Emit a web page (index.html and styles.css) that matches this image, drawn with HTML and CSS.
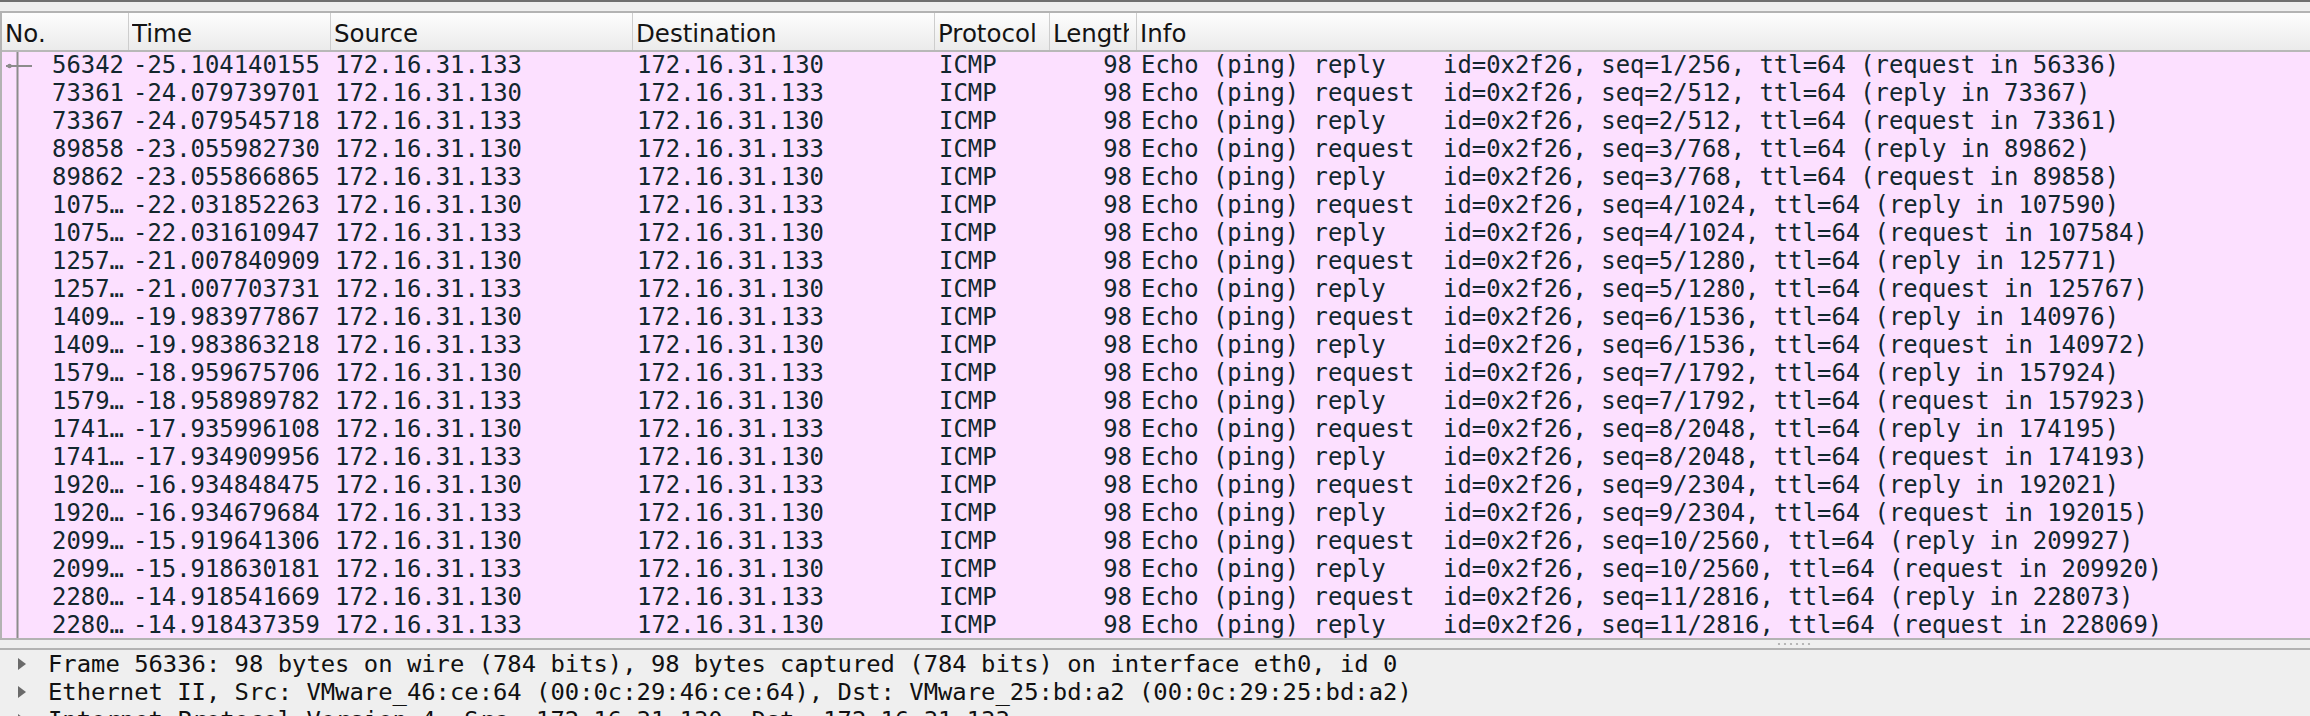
FILE: index.html
```html
<!DOCTYPE html>
<html>
<head>
<meta charset="utf-8">
<link rel="stylesheet" href="styles.css">
</head>
<body>
<div class="topline"></div>
<div class="gap"></div>
<div class="plist">
  <div class="phead">
    <div class="hc"><span class="ht">No.</span></div>
    <div class="hc"><span class="ht">Time</span></div>
    <div class="hc"><span class="ht">Source</span></div>
    <div class="hc"><span class="ht">Destination</span></div>
    <div class="hc"><span class="ht">Protocol</span></div>
    <div class="hc"><span class="ht">Length</span></div>
    <div class="hc last"><span class="ht">Info</span></div>
  </div>
  <div class="pbody">
    <svg class="rel" width="40" height="600" viewBox="0 0 40 600">
      <line x1="15.5" y1="0" x2="15.5" y2="600" stroke="#8c8c8c" stroke-width="2"/>
      <line x1="4" y1="14" x2="30" y2="14" stroke="#8c8c8c" stroke-width="2"/>
      <circle cx="7.5" cy="14" r="2.2" fill="#8c8c8c"/>
    </svg>
    <div class="row"><span class="c r">56342</span><span class="c">-25.104140155</span><span class="c">172.16.31.133</span><span class="c">172.16.31.130</span><span class="c">ICMP</span><span class="c r">98</span><span class="c">Echo (ping) reply    id=0x2f26, seq=1/256, ttl=64 (request in 56336)</span></div>
    <div class="row"><span class="c r">73361</span><span class="c">-24.079739701</span><span class="c">172.16.31.130</span><span class="c">172.16.31.133</span><span class="c">ICMP</span><span class="c r">98</span><span class="c">Echo (ping) request  id=0x2f26, seq=2/512, ttl=64 (reply in 73367)</span></div>
    <div class="row"><span class="c r">73367</span><span class="c">-24.079545718</span><span class="c">172.16.31.133</span><span class="c">172.16.31.130</span><span class="c">ICMP</span><span class="c r">98</span><span class="c">Echo (ping) reply    id=0x2f26, seq=2/512, ttl=64 (request in 73361)</span></div>
    <div class="row"><span class="c r">89858</span><span class="c">-23.055982730</span><span class="c">172.16.31.130</span><span class="c">172.16.31.133</span><span class="c">ICMP</span><span class="c r">98</span><span class="c">Echo (ping) request  id=0x2f26, seq=3/768, ttl=64 (reply in 89862)</span></div>
    <div class="row"><span class="c r">89862</span><span class="c">-23.055866865</span><span class="c">172.16.31.133</span><span class="c">172.16.31.130</span><span class="c">ICMP</span><span class="c r">98</span><span class="c">Echo (ping) reply    id=0x2f26, seq=3/768, ttl=64 (request in 89858)</span></div>
    <div class="row"><span class="c r">1075…</span><span class="c">-22.031852263</span><span class="c">172.16.31.130</span><span class="c">172.16.31.133</span><span class="c">ICMP</span><span class="c r">98</span><span class="c">Echo (ping) request  id=0x2f26, seq=4/1024, ttl=64 (reply in 107590)</span></div>
    <div class="row"><span class="c r">1075…</span><span class="c">-22.031610947</span><span class="c">172.16.31.133</span><span class="c">172.16.31.130</span><span class="c">ICMP</span><span class="c r">98</span><span class="c">Echo (ping) reply    id=0x2f26, seq=4/1024, ttl=64 (request in 107584)</span></div>
    <div class="row"><span class="c r">1257…</span><span class="c">-21.007840909</span><span class="c">172.16.31.130</span><span class="c">172.16.31.133</span><span class="c">ICMP</span><span class="c r">98</span><span class="c">Echo (ping) request  id=0x2f26, seq=5/1280, ttl=64 (reply in 125771)</span></div>
    <div class="row"><span class="c r">1257…</span><span class="c">-21.007703731</span><span class="c">172.16.31.133</span><span class="c">172.16.31.130</span><span class="c">ICMP</span><span class="c r">98</span><span class="c">Echo (ping) reply    id=0x2f26, seq=5/1280, ttl=64 (request in 125767)</span></div>
    <div class="row"><span class="c r">1409…</span><span class="c">-19.983977867</span><span class="c">172.16.31.130</span><span class="c">172.16.31.133</span><span class="c">ICMP</span><span class="c r">98</span><span class="c">Echo (ping) request  id=0x2f26, seq=6/1536, ttl=64 (reply in 140976)</span></div>
    <div class="row"><span class="c r">1409…</span><span class="c">-19.983863218</span><span class="c">172.16.31.133</span><span class="c">172.16.31.130</span><span class="c">ICMP</span><span class="c r">98</span><span class="c">Echo (ping) reply    id=0x2f26, seq=6/1536, ttl=64 (request in 140972)</span></div>
    <div class="row"><span class="c r">1579…</span><span class="c">-18.959675706</span><span class="c">172.16.31.130</span><span class="c">172.16.31.133</span><span class="c">ICMP</span><span class="c r">98</span><span class="c">Echo (ping) request  id=0x2f26, seq=7/1792, ttl=64 (reply in 157924)</span></div>
    <div class="row"><span class="c r">1579…</span><span class="c">-18.958989782</span><span class="c">172.16.31.133</span><span class="c">172.16.31.130</span><span class="c">ICMP</span><span class="c r">98</span><span class="c">Echo (ping) reply    id=0x2f26, seq=7/1792, ttl=64 (request in 157923)</span></div>
    <div class="row"><span class="c r">1741…</span><span class="c">-17.935996108</span><span class="c">172.16.31.130</span><span class="c">172.16.31.133</span><span class="c">ICMP</span><span class="c r">98</span><span class="c">Echo (ping) request  id=0x2f26, seq=8/2048, ttl=64 (reply in 174195)</span></div>
    <div class="row"><span class="c r">1741…</span><span class="c">-17.934909956</span><span class="c">172.16.31.133</span><span class="c">172.16.31.130</span><span class="c">ICMP</span><span class="c r">98</span><span class="c">Echo (ping) reply    id=0x2f26, seq=8/2048, ttl=64 (request in 174193)</span></div>
    <div class="row"><span class="c r">1920…</span><span class="c">-16.934848475</span><span class="c">172.16.31.130</span><span class="c">172.16.31.133</span><span class="c">ICMP</span><span class="c r">98</span><span class="c">Echo (ping) request  id=0x2f26, seq=9/2304, ttl=64 (reply in 192021)</span></div>
    <div class="row"><span class="c r">1920…</span><span class="c">-16.934679684</span><span class="c">172.16.31.133</span><span class="c">172.16.31.130</span><span class="c">ICMP</span><span class="c r">98</span><span class="c">Echo (ping) reply    id=0x2f26, seq=9/2304, ttl=64 (request in 192015)</span></div>
    <div class="row"><span class="c r">2099…</span><span class="c">-15.919641306</span><span class="c">172.16.31.130</span><span class="c">172.16.31.133</span><span class="c">ICMP</span><span class="c r">98</span><span class="c">Echo (ping) request  id=0x2f26, seq=10/2560, ttl=64 (reply in 209927)</span></div>
    <div class="row"><span class="c r">2099…</span><span class="c">-15.918630181</span><span class="c">172.16.31.133</span><span class="c">172.16.31.130</span><span class="c">ICMP</span><span class="c r">98</span><span class="c">Echo (ping) reply    id=0x2f26, seq=10/2560, ttl=64 (request in 209920)</span></div>
    <div class="row"><span class="c r">2280…</span><span class="c">-14.918541669</span><span class="c">172.16.31.130</span><span class="c">172.16.31.133</span><span class="c">ICMP</span><span class="c r">98</span><span class="c">Echo (ping) request  id=0x2f26, seq=11/2816, ttl=64 (reply in 228073)</span></div>
    <div class="row"><span class="c r">2280…</span><span class="c">-14.918437359</span><span class="c">172.16.31.133</span><span class="c">172.16.31.130</span><span class="c">ICMP</span><span class="c r">98</span><span class="c">Echo (ping) reply    id=0x2f26, seq=11/2816, ttl=64 (request in 228069)</span></div>
  </div>
</div>
<div class="splitter">
  <svg class="grip" width="36" height="4" viewBox="0 0 36 4">
    <circle cx="2" cy="2" r="1.1" fill="#a9a9a9"/>
    <circle cx="8" cy="2" r="1.1" fill="#a9a9a9"/>
    <circle cx="14" cy="2" r="1.1" fill="#a9a9a9"/>
    <circle cx="20" cy="2" r="1.1" fill="#a9a9a9"/>
    <circle cx="26" cy="2" r="1.1" fill="#a9a9a9"/>
    <circle cx="32" cy="2" r="1.1" fill="#a9a9a9"/>
  </svg>
</div>
<div class="details">
  <div class="drow"><svg class="tri" width="10" height="14" viewBox="0 0 10 14"><polygon points="1,1 9,7 1,13" fill="#6a6a6a"/></svg><span class="dt">Frame 56336: 98 bytes on wire (784 bits), 98 bytes captured (784 bits) on interface eth0, id 0</span></div>
  <div class="drow"><svg class="tri" width="10" height="14" viewBox="0 0 10 14"><polygon points="1,1 9,7 1,13" fill="#6a6a6a"/></svg><span class="dt">Ethernet II, Src: VMware_46:ce:64 (00:0c:29:46:ce:64), Dst: VMware_25:bd:a2 (00:0c:29:25:bd:a2)</span></div>
  <div class="drow"><svg class="tri" width="10" height="14" viewBox="0 0 10 14"><polygon points="1,1 9,7 1,13" fill="#6a6a6a"/></svg><span class="dt">Internet Protocol Version 4, Src: 172.16.31.130, Dst: 172.16.31.133</span></div>
</div>
</body>
</html>
```

FILE: styles.css
```css
html, body {
  margin: 0;
  padding: 0;
}
body {
  width: 2310px;
  height: 716px;
  overflow: hidden;
  background: #efefef;
}
.topline {
  height: 2px;
  background: #707070;
}
.gap {
  height: 9px;
}
.plist {
  border-top: 2px solid #b3b3b3;
  border-left: 2px solid #b3b3b3;
  border-bottom: 2px solid #b3b3b3;
  height: 625px;
  overflow: hidden;
  background: #ffffff;
}
.phead {
  display: grid;
  grid-template-columns: 127px 202px 302px 302px 115px 87px 1fr;
  height: 37px;
  background: linear-gradient(#fdfdfd, #ebebeb);
  border-bottom: 2px solid #b8b8b8;
  font-family: "DejaVu Sans", sans-serif;
  font-size: 24.5px;
  color: #141414;
}
.hc {
  border-right: 1px solid #cdcdcd;
  padding-left: 3px;
  padding-right: 7px;
  padding-top: 4px;
  line-height: 33px;
  min-width: 0;
}
.ht {
  display: block;
  white-space: nowrap;
  overflow: hidden;
}
.hc.last {
  border-right: none;
}
.pbody {
  position: relative;
}
.rel {
  position: absolute;
  left: 0;
  top: 0;
}
.row {
  display: grid;
  grid-template-columns: 127px 202px 302px 302px 115px 87px 1fr;
  height: 28px;
  background: #fce0ff;
  color: #12272e;
  font-family: "DejaVu Sans Mono", monospace;
  font-size: 23.9px;
  line-height: 26px;
}
.c {
  white-space: pre;
  overflow: hidden;
  padding-left: 4px;
}
.c.r {
  text-align: right;
  padding-left: 0;
  padding-right: 5px;
}
.splitter {
  height: 8px;
  display: flex;
  align-items: center;
  padding-left: 1777px;
}
.grip {
  display: block;
}
.details {
  border-top: 2px solid #b3b3b3;
  background: #efefef;
}
.drow {
  display: flex;
  align-items: center;
  height: 28px;
  color: #111111;
  font-family: "DejaVu Sans Mono", monospace;
  font-size: 23.85px;
}
.tri {
  margin-left: 17px;
  margin-right: 21px;
  flex: none;
}
.dt {
  white-space: pre;
  line-height: 26px;
}
```
